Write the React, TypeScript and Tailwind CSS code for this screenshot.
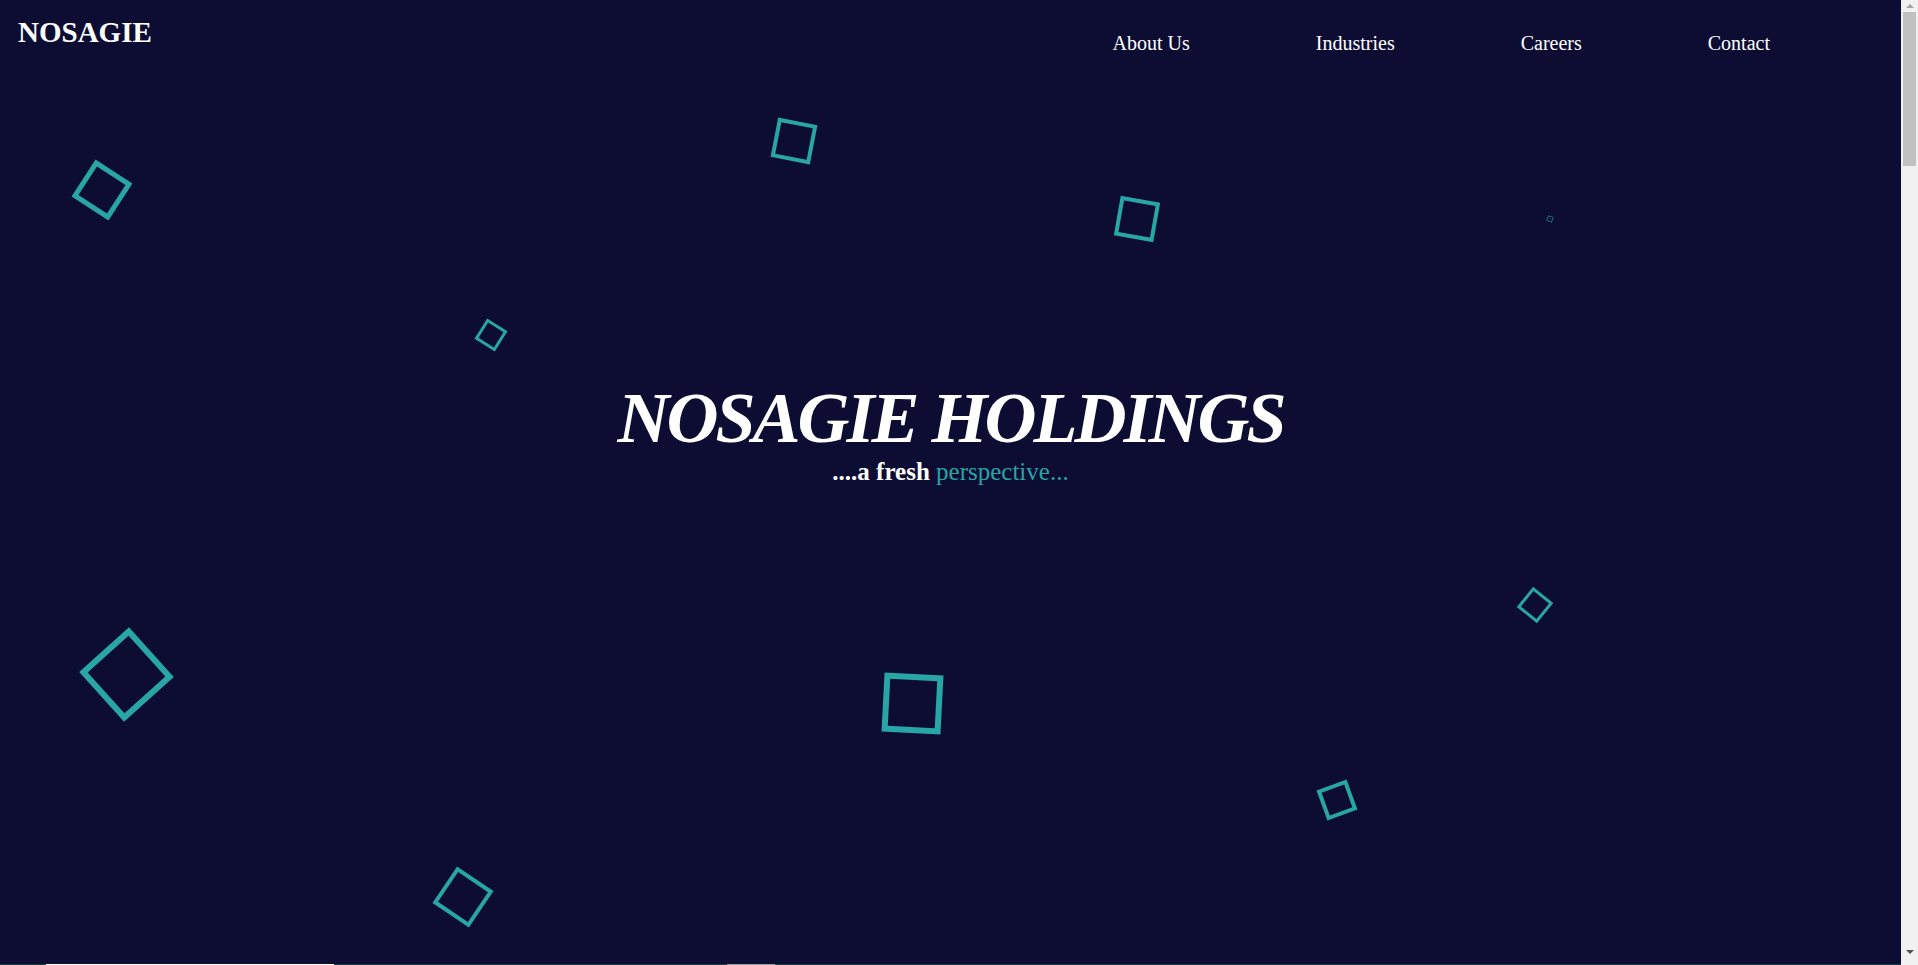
import React from 'react';

// floating outline squares in the hero, as they sit in the frame
const SQUARES = [
  'left-[80px] top-[168px] size-[44px] rotate-[33deg] border-[5px]',
  'left-[479px] top-[323px] size-[24px] rotate-[32deg] border-[3px]',
  'left-[774px] top-[121px] size-[40px] rotate-[11deg] border-[4px]',
  'left-[1117px] top-[199px] size-[40px] rotate-[10deg] border-[4px]',
  'left-[1547px] top-[216px] size-[6px] rotate-[20deg] border opacity-60',
  'left-[93px] top-[641px] size-[67px] rotate-[48deg] border-[6px]',
  'left-[441px] top-[875px] size-[44px] rotate-[34deg] border-[4px]',
  'left-[883px] top-[674px] size-[59px] rotate-[3deg] border-[6px]',
  'left-[1321px] top-[784px] size-[32px] rotate-[-20deg] border-[4px]',
  'left-[1522px] top-[592px] size-[26px] rotate-[39deg] border-[3px]',
];

const NAV = ['About Us', 'Industries', 'Careers', 'Contact'];

const Scrollbar: React.FC = () => (
  <div className="flex h-screen w-[17px] shrink-0 flex-col items-center bg-[#f1f1f1]">
    <div className="flex h-[12px] items-center justify-center">
      <div className="h-0 w-0 border-x-[4px] border-b-[4px] border-x-transparent border-b-[#a3a3a3]"></div>
    </div>
    <div className="h-[154px] w-[13px] bg-[#c1c1c1]"></div>
    <div className="flex-1"></div>
    <div className="flex h-[17px] items-start justify-center pt-[2px]">
      <div className="h-0 w-0 border-x-[4px] border-t-[4px] border-x-transparent border-t-[#505050]"></div>
    </div>
  </div>
);

const App: React.FC = () => {
  return (
    <div className="flex h-screen overflow-hidden">
      <div className="h-screen flex-1 overflow-y-auto bg-[#0d0d34] font-['Liberation_Serif',serif] text-white [scrollbar-width:none]">
        {/* Hero */}
        <section className="relative h-[964px] overflow-hidden">
          {SQUARES.map((cls, idx) => (
            <div key={idx} className={`absolute border-[#28a5a5] ${cls}`}></div>
          ))}

          <header className="relative flex items-start justify-between">
            <a href="#" className="pl-[18px] pt-[18px] text-[29px] font-bold leading-none">
              NOSAGIE
            </a>
            <nav className="flex gap-[126px] pr-[131px] pt-[33px]">
              {NAV.map((item) => (
                <a key={item} href="#" className="text-[20px] leading-none">
                  {item}
                </a>
              ))}
            </nav>
          </header>

          <div className="relative flex flex-col items-center pt-[329px]">
            <h1 className="text-[72px] font-bold italic leading-none tracking-[-3px]">
              NOSAGIE HOLDINGS
            </h1>
            <p className="mt-[5px] text-[25px] leading-none">
              <span className="font-bold">....a fresh </span>
              <span className="text-[#28a5a5]">perspective...</span>
            </p>
          </div>
        </section>

        {/* Next section, only its top edge shows */}
        <section className="relative h-[4870px] bg-[#1b3a44]">
          <div className="flex items-start">
            <div className="ml-[46px] h-[320px] w-[288px] bg-white"></div>
            <div className="ml-[393px] h-[320px] w-[48px] bg-gray-400"></div>
          </div>
        </section>
      </div>
      <Scrollbar />
    </div>
  );
};

export default App;
